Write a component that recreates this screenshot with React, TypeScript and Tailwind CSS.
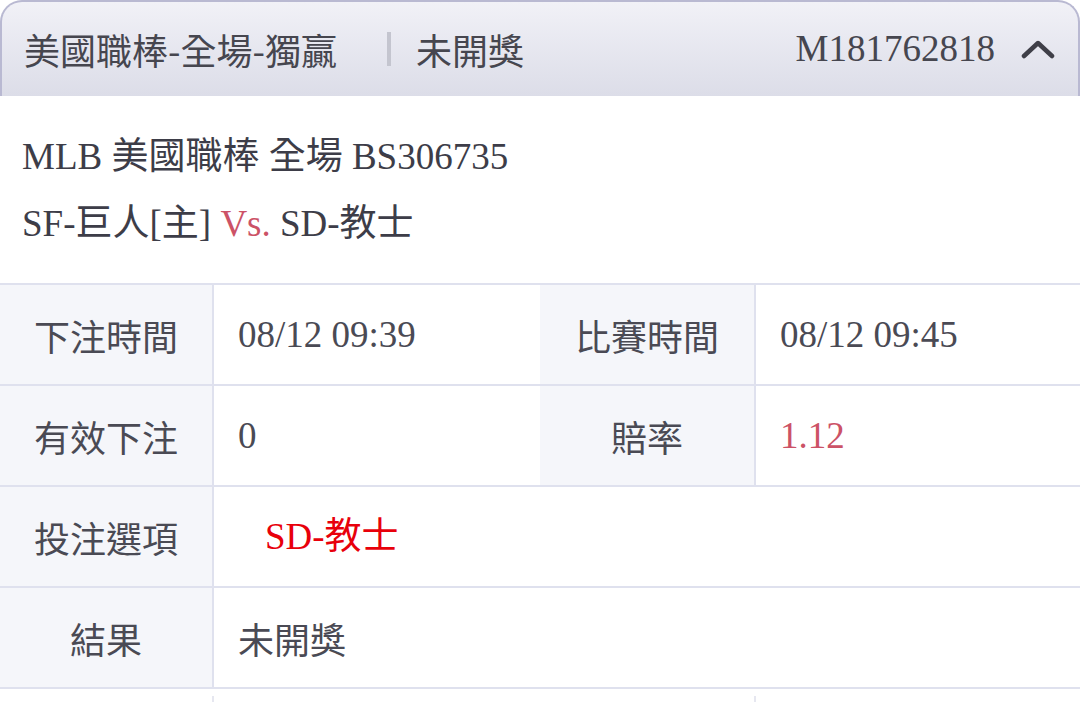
import React from "react";

const serif = { fontFamily: '"Liberation Serif", "Noto Sans CJK TC", serif' };
const sans = { fontFamily: '"Noto Sans CJK TC", "Noto Sans", sans-serif' };

function Label({ children }: { children: React.ReactNode }) {
  return (
    <div
      className="flex items-center justify-center bg-[#f5f6fa] text-[36px] text-[#4a4a54] border-r-2 border-[#dfe1ee]"
      style={sans}
    >
      {children}
    </div>
  );
}

function Value({ children, className = "" }: { children: React.ReactNode; className?: string }) {
  return (
    <div className={`flex items-center pl-6 text-[37px] text-[#4a4a54] bg-white ${className}`} style={serif}>
      {children}
    </div>
  );
}

export default function App() {
  return (
    <div className="w-[1080px] h-[702px] overflow-hidden bg-white">
      {/* Header */}
      <div className="h-[96px] flex items-center justify-between px-[22px] rounded-t-[22px] border-2 border-b-0 border-[#b9b9d2] bg-gradient-to-b from-[#f1f1f7] to-[#dcdde8]">
        <div className="flex items-center text-[36px] text-[#46464f]" style={sans}>
          <span>美國職棒-全場-獨贏</span>
          <span className="ml-[50px] mr-[25px] w-[4px] h-[34px] bg-[#c4c5cf]" />
          <span>未開獎</span>
        </div>
        <div className="flex items-center gap-[26px] text-[37px] text-[#46464f]" style={serif}>
          <span>M181762818</span>
          <svg width="34" height="22" viewBox="0 0 34 22" className="mr-[1px]">
            <path d="M3 18 L17 5 L31 18" fill="none" stroke="#3f3f48" strokeWidth="4.5" strokeLinecap="round" strokeLinejoin="round" />
          </svg>
        </div>
      </div>

      {/* Match info */}
      <div className="h-[187px] flex flex-col justify-center gap-[22px] px-[22px] text-[37px] text-[#3d3d48] leading-[45px]" style={serif}>
        <div>MLB 美國職棒 全場 BS306735</div>
        <div>
          SF-巨人[主] <span className="text-[#cc5266]">Vs.</span> SD-教士
        </div>
      </div>

      {/* Detail table */}
      <div className="grid grid-cols-[214px_326px_216px_324px] border-t-2 border-[#dfe1ee]">
        <Label>下注時間</Label>
        <Value className="h-[99px]">08/12 09:39</Value>
        <Label>比賽時間</Label>
        <Value>08/12 09:45</Value>
        <div className="col-span-4 h-[2px] bg-[#dfe1ee]" />
        <Label>有效下注</Label>
        <Value className="h-[99px]">0</Value>
        <Label>賠率</Label>
        <Value>
          <span className="text-[#cc5266]">1.12</span>
        </Value>
        <div className="col-span-4 h-[2px] bg-[#dfe1ee]" />
        <Label>投注選項</Label>
        <Value className="col-span-3 h-[99px] pl-[51px]">
          <span className="text-[#e8000b]">SD-教士</span>
        </Value>
        <div className="col-span-4 h-[2px] bg-[#dfe1ee]" />
        <Label>結果</Label>
        <Value className="col-span-3 h-[99px]">
          <span className="text-[36px]" style={sans}>未開獎</span>
        </Value>
        <div className="col-span-4 h-[2px] bg-[#dfe1ee]" />
        <div className="h-[14px] pt-[7px] flex justify-end">
          <span className="w-[2px] h-full bg-[#e6e7f0]" />
        </div>
        <div className="h-[14px] pt-[7px] col-span-2 flex justify-end">
          <span className="w-[2px] h-full bg-[#e6e7f0]" />
        </div>
        <div className="h-[14px]" />
      </div>
    </div>
  );
}
